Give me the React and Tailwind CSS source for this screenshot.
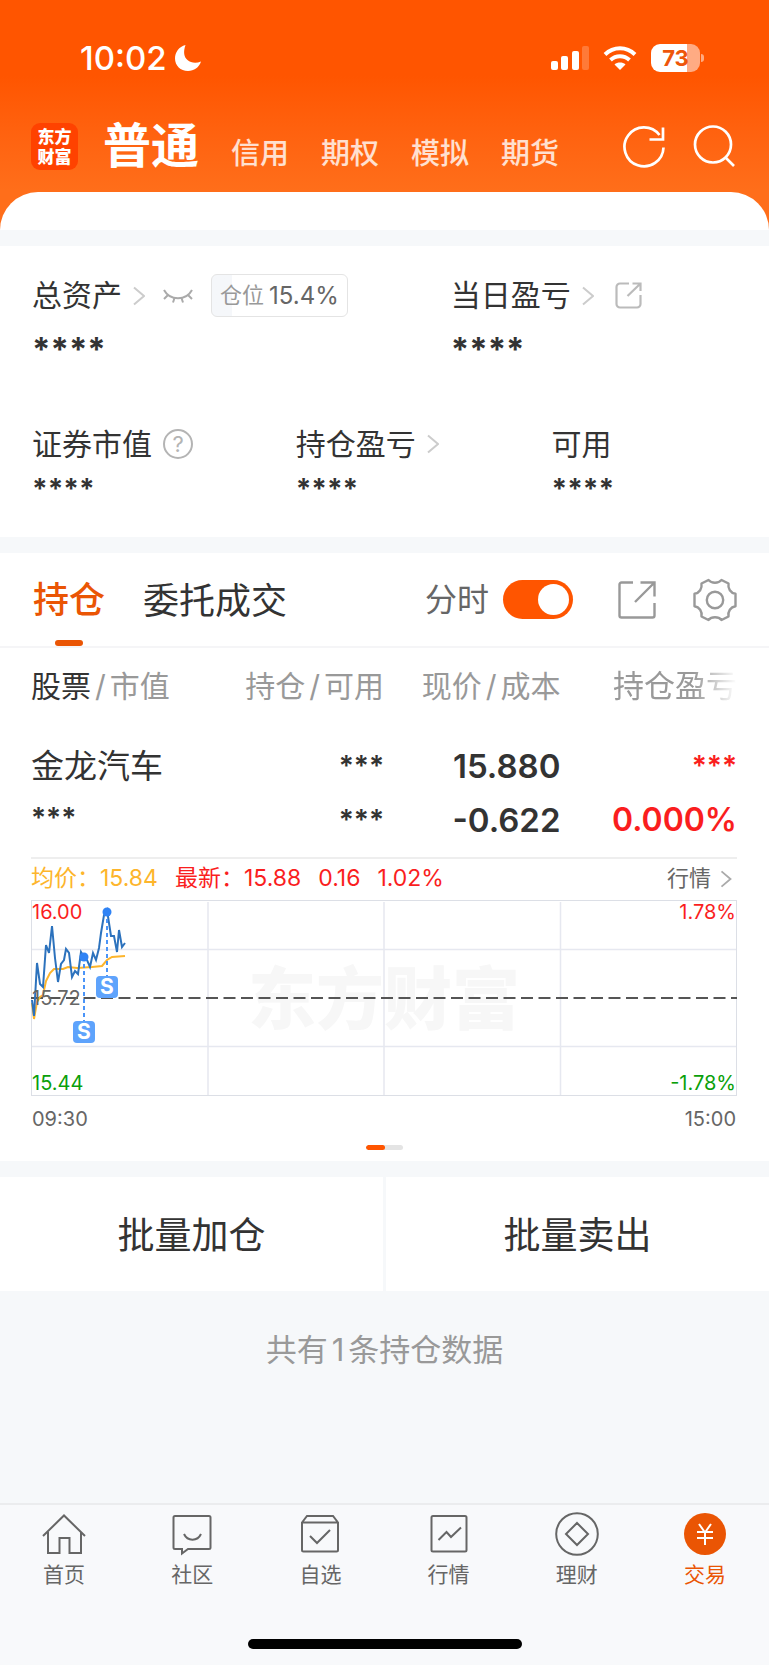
import { useState } from 'react';

const ORANGE = '#ea5504';

const accountTabs = ['信用', '期权', '模拟', '期货'];

const pricePoints =
  '1,100 3,116 6,63 9,84 12,87 15,45 18,53 21,26 24,58 27,82 30,64 33,60 35,49 38,53 41,77 44,71 47,74 50,52 53,57 56,60 59,67 62,53 65,60 68,48 70,33 73,15 76,10 80,36 83,36 86,52 88,30 91,47 94,43';
const averagePoints =
  '1,103 3,119 6,102 9,97 12,95 15,81 19,73 23,69 32,69 37,67 46,68 61,67 71,66 76,60 81,57 94,56';

const trades = [
  { x: 53, y: 57, boxY: 121 },
  { x: 76, y: 12, boxY: 76 },
];

function Chevron({ className }) {
  return (
    <svg className={className} width="12" height="20" viewBox="0 0 12 20" fill="none" stroke="currentColor" strokeWidth="2" aria-hidden="true">
      <path d="M1 1.5 11 10 1 18.5" />
    </svg>
  );
}

function StatusBar() {
  return (
    <div className="flex h-[116px] items-center justify-between pl-20 pr-[65px]">
      <div className="flex items-center gap-2">
        <span className="text-[33px] leading-10 font-medium">10:02</span>
        <svg width="26" height="26" viewBox="0 0 26 26" fill="currentColor" aria-hidden="true">
          <path d="M10.5 0C8 7 9 12 12.500 15c3.500 3 8.500 3.500 13.500 1.500C24 22.500 19 26 13 26 5.500 26 0 20.500 0 13.500 0 7.500 4 1.500 10.500 0z" />
        </svg>
      </div>
      <div className="flex items-center">
        <svg width="38" height="24" viewBox="0 0 38 24" fill="currentColor" aria-hidden="true">
          <rect x="0" y="15" width="7" height="9" rx="2" />
          <rect x="10" y="10" width="7" height="14" rx="2" />
          <rect x="21" y="5" width="7" height="19" rx="2" />
          <rect x="31" y="0" width="7" height="24" rx="2" opacity="0.22" />
        </svg>
        <svg className="ml-[14px]" width="34" height="24" viewBox="0 0 34 24" fill="none" stroke="currentColor" aria-hidden="true">
          <path d="M2 8.500C10.500.3 23.500.3 32 8.500" strokeWidth="4" />
          <path d="M7.500 14c5.500-5 13.500-5 19 0" strokeWidth="4" />
          <path d="M17 24l-5.500-5.500c3-2.600 8-2.600 11 0z" fill="currentColor" stroke="none" />
        </svg>
        <div className="ml-[14px] flex h-7 w-[49px] items-center justify-center rounded-[9px] bg-linear-to-r from-white from-[74%] to-[#ffab83] to-[74%]">
          <span className="text-[22px] leading-7 font-bold text-[#ee560a]">73</span>
        </div>
        <div className="ml-px h-2 w-[3px] rounded-r-full bg-white/50" />
      </div>
    </div>
  );
}

function Header() {
  return (
    <header>
      <div className="flex h-[76px] items-start pl-[31px] pr-[34px]">
        <div className="mt-[7px] flex size-[47px] shrink-0 flex-col items-center justify-center rounded-[9px] bg-[#ff4200] text-[17px] leading-5 font-black">
          <span>东方</span>
          <span>财富</span>
        </div>
        <nav className="ml-[25px] flex items-center gap-8">
          <a href="#normal" className="text-[48px] leading-[60px] font-bold">普通</a>
          {accountTabs.map((tab) => (
            <a key={tab} href="#account" className="pt-4 text-[29px] leading-10 font-medium text-white/80">
              {tab}
            </a>
          ))}
        </nav>
        <div className="mt-[9px] ml-auto flex gap-7">
          <button type="button" aria-label="刷新">
            <svg width="42" height="44" viewBox="0 0 42 44" fill="none" stroke="currentColor" strokeWidth="2.700">
              <path d="M40.500 22.500A19.500 19.500 0 1 1 36.500 10" />
              <path d="M40 2.500v12H26.500" />
            </svg>
          </button>
          <button type="button" aria-label="搜索">
            <svg width="42" height="44" viewBox="0 0 42 44" fill="none" stroke="currentColor" strokeWidth="2.700">
              <circle cx="20" cy="19.500" r="18" />
              <path d="M32 32l9 9" />
            </svg>
          </button>
        </div>
      </div>
    </header>
  );
}

function Stat({ label, children }) {
  return (
    <div>
      <div className="flex h-10 items-center">
        <span>{label}</span>
        {children}
      </div>
      <p className="mt-[5px] text-[28px] leading-10 font-bold">****</p>
    </div>
  );
}

function Assets() {
  return (
    <section className="bg-white pt-7 pr-8 pb-7 pl-8 text-[30px] text-[#333]">
      <div className="grid grid-cols-[59.4%_1fr]">
        <div>
          <div className="flex h-[43px] items-center">
            <a href="#assets" className="flex items-center">
              总资产
              <Chevron className="ml-[11px] text-[#ccc]" />
            </a>
            <button type="button" aria-label="显示金额" className="ml-[18px] text-[#aaa]">
              <svg width="30" height="14" viewBox="0 0 30 14" fill="none" stroke="currentColor" strokeWidth="2">
                <path d="M1 1c6 11 22 11 28 0" />
                <path d="M5 6l-4 4M11.500 9l-1.500 4.500M18.500 9l1.500 4.500M25 6l4 4" />
              </svg>
            </button>
            <div className="ml-[18px] flex h-[43px] items-center gap-[5px] rounded-md border border-[#e4e4e4] bg-linear-to-r from-[#f5f7fa] from-[15%] to-white to-[15%] px-2 text-[22px] text-[#999]">
              仓位<span className="text-[24px] leading-8 text-[#666]">15.4%</span>
            </div>
          </div>
          <p className="mt-3 text-[33px] leading-10 font-bold">****</p>
        </div>
        <div>
          <div className="flex h-[43px] items-center">
            <a href="#today" className="flex items-center">
              当日盈亏
              <Chevron className="ml-[11px] text-[#ccc]" />
            </a>
            <button type="button" aria-label="分享当日盈亏" className="ml-[21px] text-[#bbb]">
              <svg width="27" height="27" viewBox="0 0 27 27" fill="none" stroke="currentColor" strokeWidth="2.200">
                <path d="M14 1.500H5A3.500 3.500 0 0 0 1.500 5v17A3.500 3.500 0 0 0 5 25.500h17a3.500 3.500 0 0 0 3.500-3.500v-9" />
                <path d="M17.500 1.500h8v7.500M25.500 1.500 12.500 14" />
              </svg>
            </button>
          </div>
          <p className="mt-3 text-[33px] leading-10 font-bold">****</p>
        </div>
      </div>
      <div className="mt-[55px] grid grid-cols-[37.4%_36.3%_1fr]">
        <Stat label="证券市值">
          <button type="button" aria-label="说明" className="ml-[11px] flex size-[30px] items-center justify-center rounded-full border-2 border-[#b4b4b4] text-[22px] leading-none text-[#b4b4b4]">
            ?
          </button>
        </Stat>
        <Stat label="持仓盈亏">
          <Chevron className="ml-[11px] text-[#ccc]" />
        </Stat>
        <Stat label="可用" />
      </div>
    </section>
  );
}

function HoldingTabs() {
  const [minute, setMinute] = useState(true);

  return (
    <div className="flex h-[95px] items-center border-b-2 border-[#f5f5f7] pr-8 pl-[33px]">
      <div className="flex h-full gap-[38px] text-[36px] text-[#333]">
        <button type="button" className="flex flex-col items-center font-medium text-[#ea5504]">
          <span className="mt-5 mb-[13px] leading-[54px]">持仓</span>
          <span className="h-[6px] w-7 rounded-sm bg-[#ea5504]" />
        </button>
        <button type="button" className="pt-[2px]">委托成交</button>
      </div>
      <label className="ml-auto flex items-center gap-[14px] text-[32px] text-[#666]">
        分时
        <input
          type="checkbox"
          role="switch"
          checked={minute}
          onChange={(e) => setMinute(e.target.checked)}
          className="peer sr-only"
        />
        <span className="flex h-[39px] w-[70px] items-center rounded-full bg-[#ccc] p-1 peer-checked:justify-end peer-checked:bg-[#ff5500]">
          <span className="size-[31px] rounded-full bg-white" />
        </span>
      </label>
      <button type="button" aria-label="分享持仓" className="ml-[45px] text-[#999]">
        <svg width="38" height="38" viewBox="0 0 38 38" fill="none" stroke="currentColor" strokeWidth="2.400">
          <path d="M15 1.500H3.500a2 2 0 0 0-2 2v31a2 2 0 0 0 2 2h31a2 2 0 0 0 2-2V22" />
          <path d="M22.500 1.500h14v14M36.500 1.500 17 21" />
        </svg>
      </button>
      <button type="button" aria-label="设置" className="ml-[37px] text-[#999]">
        <svg width="44" height="44" viewBox="0 0 44 44" fill="none" stroke="currentColor" strokeWidth="2.400" strokeLinejoin="round">
          <path d="M15.500 2c1.500 1.800 3.800 2.700 6.500 2.700s5-.9 6.500-2.700l7 3.500c-.8 5 2 9.500 7 10.300v12.400c-5 .8-7.800 5.300-7 10.300l-7 3.500c-1.500-1.800-3.800-2.700-6.500-2.700s-5 .9-6.500 2.700l-7-3.500c.8-5-2-9.500-7-10.300V15.800c5-.8 7.800-5.300 7-10.300z" />
          <circle cx="22" cy="22" r="8.200" />
        </svg>
      </button>
    </div>
  );
}

function HoldingTable() {
  return (
    <table className="w-full table-fixed text-right text-[#333]">
      <thead className="text-[30px] whitespace-nowrap text-[#999]">
        <tr className="h-[76px]">
          <th className="text-left font-normal">
            <span className="text-[#333]">股票</span>
            <span className="mx-1">/</span>市值
          </th>
          <th className="font-normal">持仓<span className="mx-1">/</span>可用</th>
          <th className="font-normal">现价<span className="mx-1">/</span>成本</th>
          <th className="text-[31px] font-normal [mask-image:linear-gradient(to_right,black_75%,transparent)]">持仓盈亏</th>
        </tr>
      </thead>
      <tbody className="text-[33px] leading-[54px] font-semibold">
        <tr>
          <td className="pt-[15px] text-left font-normal">金龙汽车</td>
          <td className="pt-[15px] text-[28px]">***</td>
          <td className="pt-[15px]">15.880</td>
          <td className="pt-[15px] text-[28px] text-[#fa1e1e]">***</td>
        </tr>
        <tr>
          <td className="pb-[10px] text-left align-top text-[28px] leading-[50px]">***</td>
          <td className="pb-[10px] text-[28px]">***</td>
          <td className="pb-[10px]">-0.622</td>
          <td className="pb-[10px] text-[32px] text-[#fa1e1e]">0.000%</td>
        </tr>
      </tbody>
    </table>
  );
}

function MinuteChart() {
  return (
    <div className="relative text-[20px] leading-6">
      <svg className="block w-full" viewBox="0 0 706 196" fill="none" role="img" aria-label="分时走势">
        <text x="353" y="124" textAnchor="middle" fontSize="68" fontWeight="900" fill="#f7f7f7">东方财富</text>
        <path d="M0 49.500h706M0 146.500h706M177 2v193M353 2v193M529.500 2v193" stroke="#e6e8f0" strokeWidth="1.500" />
        <rect x="0.500" y="0.500" width="705" height="195" stroke="#dcdfe6" />
        <path d="M0 98h706" stroke="#555" strokeWidth="2" strokeDasharray="12 5.500" />
        <polyline points={averagePoints} stroke="#fdb52c" strokeWidth="2" />
        <polyline points={pricePoints} stroke="#2c72bd" strokeWidth="2" />
        {trades.map((t) => (
          <g key={t.x}>
            <path d={`M${t.x} ${t.y}V${t.boxY}`} stroke="#4a94f8" strokeWidth="2" strokeDasharray="4 3" />
            <circle cx={t.x} cy={t.y} r="4.500" fill="#2f83f5" />
            <rect x={t.x - 11} y={t.boxY} width="22" height="22" rx="4" fill="#5ea3fc" />
            <text x={t.x} y={t.boxY + 18} textAnchor="middle" fontSize="21" fontWeight="700" fill="#fff">S</text>
          </g>
        ))}
      </svg>
      <span className="absolute top-0 left-px text-[#fa1e1e]">16.00</span>
      <span className="absolute top-[86px] left-px text-[#666]">15.72</span>
      <span className="absolute bottom-px left-px text-[#0a9f0a]">15.44</span>
      <span className="absolute top-0 right-px text-[#fa1e1e]">1.78%</span>
      <span className="absolute right-px bottom-px text-[#0a9f0a]">-1.78%</span>
    </div>
  );
}

function Holdings() {
  return (
    <section className="bg-white">
      <HoldingTabs />
      <div className="pr-8 pl-[31px]">
        <HoldingTable />
        <div className="flex h-[43px] items-center border-t-2 border-[#eee] pb-[2px] text-[23px] text-[#fa1e1e]">
          <span className="text-[#fdb52c]">均价：15.84</span>
          <span className="ml-[17px]">最新：15.88</span>
          <span className="ml-[17px]">0.16</span>
          <span className="ml-[17px]">1.02%</span>
          <a href="#quote" className="mr-[5px] ml-auto flex items-center text-[22px] text-[#666]">
            行情
            <Chevron className="ml-[9px] h-[18px] text-[#aaa]" />
          </a>
        </div>
        <MinuteChart />
        <div className="flex h-[46px] items-center justify-between px-px text-[20px] text-[#666]">
          <span>09:30</span>
          <span>15:00</span>
        </div>
      </div>
      <div className="flex justify-center pt-[3px] pb-[11px]">
        <div className="h-[5px] w-[37px] overflow-hidden rounded-full bg-[#e4e4e4]">
          <div className="h-full w-1/2 rounded-full bg-[#ff5500]" />
        </div>
      </div>
    </section>
  );
}

const navItems = [
  {
    label: '首页',
    icon: (
      <>
        <path d="M1 24 22 3.500 43 24" />
        <path d="M6 20v21h11.500V26h10v15H39V20" />
      </>
    ),
  },
  {
    label: '社区',
    icon: (
      <>
        <path d="M5 4h34a1.500 1.500 0 0 1 1.500 1.500v30A1.500 1.500 0 0 1 39 37H18l-6 4.500V37H5a1.500 1.500 0 0 1-1.500-1.500v-30A1.500 1.500 0 0 1 5 4z" />
        <path d="M14 22c3.500 7.500 13.500 7.500 17 0" />
      </>
    ),
  },
  {
    label: '自选',
    icon: (
      <>
        <path d="M4 10.500 9 4h26l5 6.500V38a1.500 1.500 0 0 1-1.500 1.500h-33A1.500 1.500 0 0 1 4 38zM4 10.500h36" />
        <path d="M12 24l7 7 13-13" />
      </>
    ),
  },
  {
    label: '行情',
    icon: (
      <>
        <rect x="4.500" y="4" width="35" height="35.500" rx="1.500" />
        <path d="M11.500 28l8-8 4.500 5 10-9.500" />
      </>
    ),
  },
  {
    label: '理财',
    icon: (
      <>
        <circle cx="22" cy="22" r="20.800" />
        <path d="M22 11l11 11-11 11-11-11z" />
      </>
    ),
  },
  {
    label: '交易',
    active: true,
    icon: (
      <>
        <circle cx="22" cy="22" r="21" fill={ORANGE} stroke="none" />
        <path d="M16 12l6 8.500L28 12M22 20.500V33M14 20h16M14 26h16" stroke="#fff" />
      </>
    ),
  },
];

function BottomNav() {
  return (
    <footer className="mt-auto border-t-2 border-[#ebecee] bg-[#f8f9fb]">
      <nav className="grid grid-cols-6 pt-[7px]">
        {navItems.map((item) => (
          <a
            key={item.label}
            href={`#${item.label}`}
            className={`flex flex-col items-center text-[21px] leading-8 ${item.active ? 'text-[#ea5504]' : 'text-[#666]'}`}
          >
            <svg width="44" height="44" viewBox="0 0 44 44" fill="none" stroke="currentColor" strokeWidth="2" aria-hidden="true">
              {item.icon}
            </svg>
            <span className="mt-[3px]">{item.label}</span>
          </a>
        ))}
      </nav>
      <div className="mx-auto mt-12 mb-4 h-[10px] w-[274px] rounded-full bg-black" />
    </footer>
  );
}

export default function App() {
  return (
    <div className="flex min-h-screen flex-col bg-[#f6f8fa] font-['Inter','Noto_Sans_CJK_SC',sans-serif]">
      <div className="bg-linear-to-b from-[#ff5500] from-[33%] to-[#ff6e1a] to-[83%] text-white">
        <StatusBar />
        <Header />
        <div className="h-[38px] rounded-t-[38px] bg-white" />
      </div>
      <main className="flex flex-col">
        <div className="h-4" />
        <Assets />
        <div className="h-4" />
        <Holdings />
        <div className="mt-4 grid grid-cols-2 gap-[3px] text-[37px] leading-[54px] text-[#333]">
          <button type="button" className="bg-white pt-8 pb-7">批量加仓</button>
          <button type="button" className="bg-white pt-8 pb-7">批量卖出</button>
        </div>
        <p className="mt-9 text-center text-[31px] leading-[46px] text-[#999]">
          共有<span className="mx-1">1</span>条持仓数据
        </p>
      </main>
      <BottomNav />
    </div>
  );
}
